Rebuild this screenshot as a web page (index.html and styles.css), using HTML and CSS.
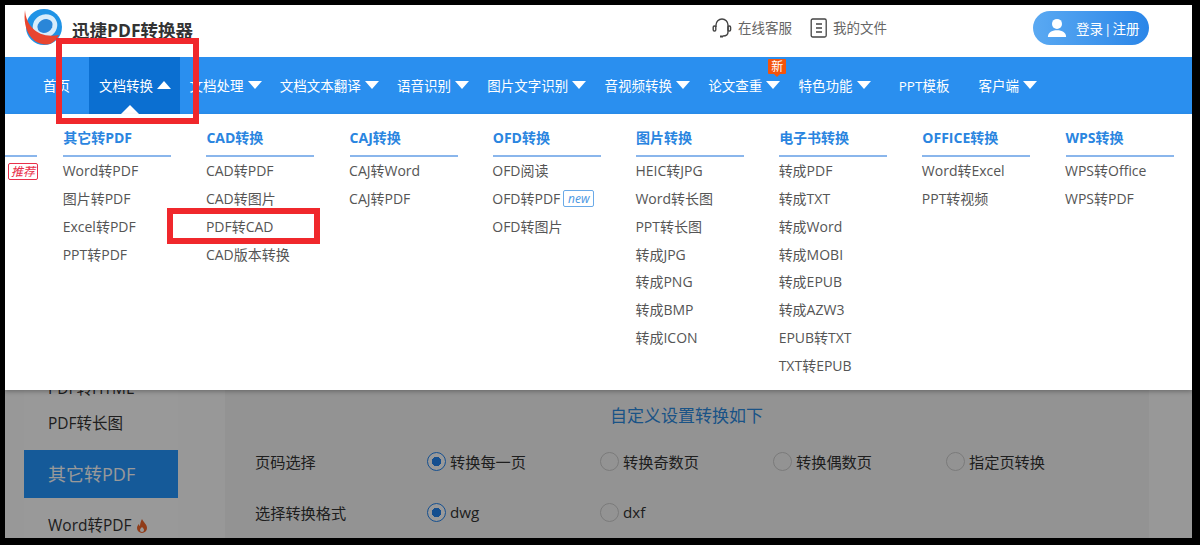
FILE: index.html
```html
<!DOCTYPE html>
<html lang="zh-CN">
<head>
<meta charset="utf-8">
<title>迅捷PDF转换器</title>
<link rel="stylesheet" href="styles.css">
</head>
<body>
<div class="frame">
  <header class="top">
    <a class="brand">
      <svg class="logo" viewBox="0 0 44 44" width="44" height="44">
        <circle cx="24" cy="21" r="18" fill="#1f93e6"/>
        <ellipse cx="25" cy="20" rx="12.500" ry="11.500" fill="#d6ecfb" transform="rotate(-30 25 20)"/>
        <ellipse cx="25" cy="20" rx="8" ry="6.500" fill="#2a86d8" transform="rotate(-30 25 20)"/>
        <path d="M5 4 C6 20 18 33 39 29 C37 33 34 36 30 38 C15 41 2 27 5 4Z" fill="#e8452f"/>
      </svg>
      <span class="brand-name">迅捷PDF转换器</span>
    </a>
    <div class="top-links">
      <a class="top-link">
        <svg viewBox="0 0 22 22" width="22" height="22" fill="none" stroke="#444" stroke-width="1.400"><path d="M5 10V8a6 6 0 0 1 12 0v7c0 3-2 4-5 4"/><rect x="2.200" y="9" width="2.600" height="5" rx="1.200"/><rect x="17" y="9" width="2.600" height="5" rx="1.200"/><path d="M9 19.500h3" stroke-width="2"/></svg>
        <span>在线客服</span>
      </a>
      <a class="top-link files">
        <svg viewBox="0 0 18 20" width="18" height="20" fill="none" stroke="#444" stroke-width="1.300"><rect x="1.200" y="1" width="15" height="18" rx="1.500"/><path d="M6 6h6M6 10h6M6 14h6"/></svg>
        <span>我的文件</span>
      </a>
      <a class="login">
        <svg viewBox="0 0 22 22" width="20" height="20" fill="#fff"><circle cx="11" cy="6.500" r="5.500"/><path d="M1 21c0-5 4-7.500 10-7.500S21 16 21 21Z"/></svg>
        <span>登录<span class="bar">|</span>注册</span>
      </a>
    </div>
  </header>

  <nav class="nav">
    <a class="nav-item plain home">首页</a>
    <a class="nav-item active">文档转换<i class="caret up"></i></a>
    <a class="nav-item">文档处理<i class="caret"></i></a>
    <a class="nav-item">文档文本翻译<i class="caret"></i></a>
    <a class="nav-item">语音识别<i class="caret"></i></a>
    <a class="nav-item">图片文字识别<i class="caret"></i></a>
    <a class="nav-item">音视频转换<i class="caret"></i></a>
    <a class="nav-item">论文查重<i class="caret"></i><b class="tag-new">新</b></a>
    <a class="nav-item feature">特色功能<i class="caret"></i></a>
    <a class="nav-item plain ppt">PPT模板</a>
    <a class="nav-item">客户端<i class="caret"></i></a>
  </nav>

  <main class="page">
    <aside class="side">
      <div class="side-item">PDF转HTML</div>
      <div class="side-item">PDF转长图</div>
      <div class="side-head">其它转PDF</div>
      <div class="side-item">Word转PDF
        <svg class="fire" viewBox="0 0 12 14" width="12" height="14"><path d="M6 0c1 3 5 5 5 9a5 5 0 0 1-10 0c0-2 1-3 2-4 0 1 .5 2 1 2 0-3 1-5 2-7Z" fill="#f0642a"/><path d="M6 8c1 1 2 2 2 3a2 2 0 0 1-4 0c0-1 1-2 2-3Z" fill="#fff"/></svg>
      </div>
    </aside>
    <section class="card">
      <h2 class="card-title">自定义设置转换如下</h2>
      <div class="opt-row">
        <span class="opt-label">页码选择</span>
        <span class="radio on">转换每一页</span>
        <span class="radio">转换奇数页</span>
        <span class="radio">转换偶数页</span>
        <span class="radio">指定页转换</span>
      </div>
      <div class="opt-row">
        <span class="opt-label">选择转换格式</span>
        <span class="radio on">dwg</span>
        <span class="radio">dxf</span>
      </div>
    </section>
    <div class="mask"></div>
  </main>

  <div class="menu">
    <div class="stub">
      <div class="col-title">&nbsp;</div>
      <span class="hot-tag">推荐</span>
    </div>
    <div class="col">
      <div class="col-title">其它转PDF</div>
      <a>Word转PDF</a><a>图片转PDF</a><a>Excel转PDF</a><a>PPT转PDF</a>
    </div>
    <div class="col">
      <div class="col-title">CAD转换</div>
      <a>CAD转PDF</a><a>CAD转图片</a><a>PDF转CAD</a><a>CAD版本转换</a>
    </div>
    <div class="col">
      <div class="col-title">CAJ转换</div>
      <a>CAJ转Word</a><a>CAJ转PDF</a>
    </div>
    <div class="col">
      <div class="col-title">OFD转换</div>
      <a>OFD阅读</a><a>OFD转PDF<em class="tag-tiny">new</em></a><a>OFD转图片</a>
    </div>
    <div class="col">
      <div class="col-title">图片转换</div>
      <a>HEIC转JPG</a><a>Word转长图</a><a>PPT转长图</a><a>转成JPG</a><a>转成PNG</a><a>转成BMP</a><a>转成ICON</a>
    </div>
    <div class="col">
      <div class="col-title">电子书转换</div>
      <a>转成PDF</a><a>转成TXT</a><a>转成Word</a><a>转成MOBI</a><a>转成EPUB</a><a>转成AZW3</a><a>EPUB转TXT</a><a>TXT转EPUB</a>
    </div>
    <div class="col">
      <div class="col-title">OFFICE转换</div>
      <a>Word转Excel</a><a>PPT转视频</a>
    </div>
    <div class="col">
      <div class="col-title">WPS转换</div>
      <a>WPS转Office</a><a>WPS转PDF</a>
    </div>
  </div>

  <div class="mark mark-nav"></div>
  <div class="mark mark-cad"></div>
</div>
</body>
</html>
```
FILE: styles.css
```css
* { box-sizing: border-box; }
html, body { margin: 0; height: 100%; overflow: hidden; background: #000; }
body {
  padding: 5px 8px 7px 5px;
  font-family: "Open Sans", "Noto Sans CJK SC", sans-serif;
  color: #333;
}
a { color: inherit; text-decoration: none; }

.frame {
  position: relative;
  height: 533px;
  display: flex;
  flex-direction: column;
  overflow: hidden;
  background: #fff;
}

/* header */
.top {
  height: 52px;
  flex: none;
  display: flex;
  align-items: center;
  justify-content: space-between;
  padding: 0 43px 6px 15px;
  background: #fff;
}
.brand { display: flex; align-items: center; }
.brand-name { margin-left: 8px; margin-top: 2px; font-size: 17.500px; font-weight: 700; color: #333; }
.top-links { display: flex; align-items: center; }
.top-link {
  display: flex;
  align-items: center;
  gap: 5px;
  margin-right: 18px;
  font-size: 13.500px;
  color: #666;
}
.top-link span { margin-top: -2px; }
.top-link.files { margin-right: 146px; }
.login {
  display: flex;
  align-items: center;
  gap: 9px;
  width: 116px;
  height: 34px;
  padding-left: 14px;
  border-radius: 17px;
  background: linear-gradient(90deg, #5aa9f2, #2b86e8);
  color: #fff;
  font-size: 13.500px;
  white-space: nowrap;
}
.bar { margin: 0 1px; }

/* nav */
.nav {
  height: 57px;
  flex: none;
  display: flex;
  align-items: stretch;
  padding-left: 28px;
  background: #2a8fef;
  color: #fff;
  font-size: 13.500px;
  white-space: nowrap;
}
.nav-item {
  position: relative;
  display: flex;
  align-items: center;
  padding: 0 8.250px 2px 10px;
}
.nav-item.home { padding: 0 18px 2px 10px; width: 56px; }
.nav-item.ppt { padding-left: 20px; padding-right: 19px; }
.active { background: #0b6fd1; padding-right: 8.500px; }
.active::after {
  content: "";
  position: absolute;
  left: 32px;
  bottom: 0;
  border: 9px solid transparent;
  border-top: 0;
  border-bottom-color: #fff;
}
.caret {
  margin-left: 4px;
  border-left: 7.500px solid transparent;
  border-right: 7.500px solid transparent;
  border-top: 8px solid #fff;
}
.caret.up { border-top: 0; border-bottom: 8px solid #fff; }
.tag-new {
  position: absolute;
  left: 70px;
  top: 2px;
  width: 18px;
  height: 15px;
  background: #f4540c;
  border-radius: 1px;
  color: #fff;
  font-size: 12px;
  font-weight: 400;
  line-height: 15px;
  text-align: center;
}
.tag-new::after {
  content: "";
  position: absolute;
  left: 6px;
  top: 15px;
  border: 3px solid transparent;
  border-bottom: 0;
  border-top-color: #f4540c;
}

/* dropdown */
.menu {
  position: absolute;
  left: 0;
  right: 0;
  top: 109px;
  height: 276px;
  display: flex;
  gap: 35.200px;
  background: #fff;
  box-shadow: 0 2px 4px rgba(0, 0, 0, .25);
}
.stub { width: 32px; margin-right: -9px; position: relative; }
.col { width: 108px; flex: none; }
.col-title {
  padding: 14px 0 7px;
  border-bottom: 2px solid #8ab6ec;
  color: #2a85e0;
  font-size: 14px;
  font-weight: 700;
  line-height: 20px;
}
.col a {
  display: block;
  height: 27.860px;
  line-height: 28px;
  font-size: 14px;
  color: #555;
  white-space: nowrap;
  margin-left: -0.500px;
}
.hot-tag {
  position: absolute;
  left: 3px;
  top: 49px;
  width: 30px;
  height: 17px;
  border: 1px solid #e8304a;
  border-radius: 2px;
  color: #e8304a;
  font-size: 12px;
  font-style: italic;
  line-height: 15px;
  text-align: center;
}
.tag-tiny {
  display: inline-block;
  margin-left: 3px;
  width: 31px;
  height: 17px;
  border: 1px solid #6aaae8;
  border-radius: 2px;
  color: #4a96e2;
  font-size: 12px;
  line-height: 15px;
  text-align: center;
  vertical-align: 1px;
}

/* page under the dropdown */
.page {
  position: relative;
  flex: 1;
  display: flex;
  padding-left: 19px;
  min-height: 0;
  overflow: hidden;
  background: #fdfdfd;
}
.side { width: 154px; flex: none; margin-right: 47px; padding-top: 257px; background: #fff; }
.side-item {
  height: 35px;
  line-height: 35px;
  padding-left: 24px;
  font-size: 15.500px;
  color: #333;
  white-space: nowrap;
}
.side-head {
  height: 48px;
  margin: 9px 0 10px;
  padding-left: 24px;
  background: #2396ff;
  color: #fff;
  font-size: 18px;
  line-height: 48px;
}
.fire { vertical-align: -2px; }
.card {
  width: 924px;
  flex: none;
  padding-top: 288px;
  background: #f6f6f6;
}
.card-title {
  margin: 0 0 5px;
  padding-left: 385px;
  color: #2c8ae0;
  font-size: 17px;
  font-weight: 400;
  line-height: 28px;
}
.opt-row {
  display: flex;
  align-items: center;
  height: 51px;
  padding-left: 30px;
  font-size: 15.200px;
  color: #333;
}
.opt-label { width: 173px; flex: none; }
.radio {
  position: relative;
  width: 173px;
  flex: none;
  padding-left: 23px;
  margin-left: -1px;
  margin-right: 1px;
  white-space: nowrap;
}
.radio::before {
  content: "";
  position: absolute;
  left: 0;
  top: 50%;
  width: 17px;
  height: 17px;
  margin-top: -8.500px;
  border: 1px solid #ccc;
  border-radius: 50%;
}
.radio.on::before {
  border-color: #2384ef;
  background: radial-gradient(circle, #2384ef 0 4.500px, #fff 5px);
}
.mask {
  position: absolute;
  inset: 0;
  background: rgba(0, 0, 0, .4);
}

/* annotation boxes */
.mark { position: absolute; border: 6px solid #f0282c; pointer-events: none; }
.mark-nav { left: 51px; top: 33px; width: 143px; height: 86px; }
.mark-cad { left: 162px; top: 203px; width: 153px; height: 36px; }
```
